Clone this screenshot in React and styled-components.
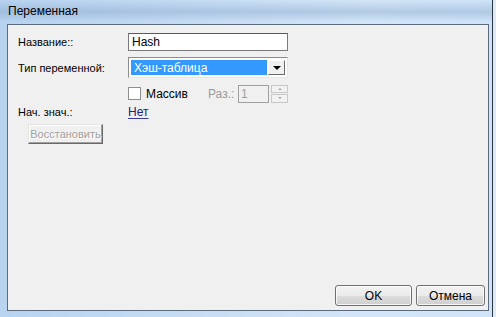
import React from 'react';
import styled, { createGlobalStyle } from 'styled-components';

const GlobalStyle = createGlobalStyle`
	html, body {
		margin: 0;
		padding: 0;
		background: #dfeaf6;
	}
	body {
		font-family: 'Liberation Sans', Arial, sans-serif;
		font-size: 11px;
		color: #000;
	}
`;

//Window frame
const Window = styled.div`
	width: 493px;
	height: 317px;
	box-sizing: border-box;
	display: flex;
	flex-direction: column;
	padding: 0 3px 6px 7px;
	border-right: 1px solid #2b3540;
	background:
		linear-gradient(180deg, rgba(120, 150, 190, 0) 0px, rgba(120, 150, 190, 0.35) 12px, rgba(120, 150, 190, 0) 22px),
		linear-gradient(90deg, #b7d3f0 0%, #c6ddf4 40%, #d3e6f8 75%, #cfe4f8 100%);
`;

const TitleBar = styled.div`
	height: 24px;
	display: flex;
	align-items: center;
	padding: 0 1px 2px;
	box-sizing: border-box;
	font-size: 12px;
	color: #000;
`;

const Client = styled.div`
	flex: 1;
	display: flex;
	flex-direction: column;
	justify-content: space-between;
	background: #f0f0f0;
	border: 1px solid #5c6b7b;
	padding: 8px 0 4px 10px;
`;

const Form = styled.div`
	display: grid;
	grid-template-columns: 110px 160px;
	row-gap: 6px;
	align-items: center;
`;

const Label = styled.span`
	line-height: 14px;
`;

const TextBox = styled.div`
	height: 18px;
	box-sizing: border-box;
	border: 1px solid #7a7a7a;
	border-top-color: #5a5a5a;
	background: #fff;
	display: flex;
	align-items: center;
	padding-left: 3px;
	font-size: 12px;
`;

const Select = styled.div`
	height: 21px;
	box-sizing: border-box;
	border: 1px solid;
	border-color: #8c8c8c #e6e6e6 #e6e6e6 #8c8c8c;
	background: #fff;
	display: flex;
	padding: 2px;
	gap: 1px;
`;

const SelectValue = styled.div`
	flex: 1;
	background: #3399ff;
	color: #fff;
	display: flex;
	align-items: center;
	padding-left: 3px;
	font-size: 12px;
`;

const DropButton = styled.div`
	width: 17px;
	background: #f0f0f0;
	border: 1px solid;
	border-color: #ffffff #696969 #696969 #ffffff;
	display: flex;
	align-items: center;
	justify-content: center;
	box-sizing: border-box;
`;

const Arrow = styled.span`
	width: 0;
	height: 0;
	border-left: 4px solid transparent;
	border-right: 4px solid transparent;
	border-top: 4px solid #000;
`;

const ArrayRow = styled.div`
	grid-column: 2;
	display: flex;
	align-items: center;
	height: 19px;
`;

const CheckBox = styled.span`
	width: 13px;
	height: 13px;
	box-sizing: border-box;
	border: 1px solid #8e8f8f;
	background: #fff;
	margin-right: 5px;
`;

const ArrayLabel = styled.span`
	width: 62px;
	margin-top: 1px;
	font-size: 12px;
`;

const SizeLabel = styled.span`
	width: 30px;
	color: #9a9a9a;
	font-size: 12px;
`;

const SizeBox = styled.div`
	width: 31px;
	height: 18px;
	box-sizing: border-box;
	border: 1px solid #a0a0a0;
	color: #a0a0a0;
	background: #f0f0f0;
	display: flex;
	align-items: center;
	padding-left: 2px;
	font-size: 12px;
`;

const Spinner = styled.div`
	margin-left: 2px;
	width: 17px;
	height: 18px;
	display: flex;
	flex-direction: column;
	gap: 1px;
`;

const SpinHalf = styled.div`
	flex: 1;
	box-sizing: border-box;
	border: 1px solid #c8c8c8;
	background: #f2f2f2;
	display: flex;
	align-items: center;
	justify-content: center;
	&::after {
		content: '';
		border-left: 2px solid transparent;
		border-right: 2px solid transparent;
		${(p) => (p.up ? 'border-bottom: 2px solid #a8a8a8;' : 'border-top: 2px solid #a8a8a8;')}
	}
`;

const LinkText = styled.span`
	color: #22227a;
	font-size: 12px;
	text-decoration: underline;
	text-decoration-color: #3a3aa0;
	text-underline-offset: 2px;
`;

const ValueRow = styled.div`
	grid-column: 1 / span 2;
	display: grid;
	grid-template-columns: 110px 1fr;
	height: 14px;
	margin-top: -4px;
`;

const RestoreButton = styled.div`
	margin: 5px 0 0 10px;
	width: 75px;
	height: 20px;
	box-sizing: border-box;
	border: 1px solid;
	border-color: #e3e3e3 #696969 #696969 #e3e3e3;
	box-shadow: inset -1px -1px 0 #a0a0a0, inset 1px 1px 0 #ffffff;
	background: #f0f0f0;
	color: #a0a0a0;
	text-shadow: 1px 1px 0 #ffffff;
	display: flex;
	align-items: center;
	justify-content: center;
	font-size: 11px;
	white-space: nowrap;
`;

const Footer = styled.div`
	display: flex;
	justify-content: flex-end;
	gap: 4px;
	padding-right: 3px;
`;

const Button = styled.div`
	width: ${(p) => p.w}px;
	height: 21px;
	box-sizing: border-box;
	border: 1px solid #707070;
	border-radius: 3px;
	background: linear-gradient(180deg, #f2f2f2 0%, #ebebeb 50%, #dddddd 51%, #cfcfcf 100%);
	box-shadow: inset 0 0 0 1px rgba(255, 255, 255, 0.8);
	display: flex;
	align-items: center;
	justify-content: center;
	color: #000;
	font-size: 12px;
`;

const App = () => {
	return (
		<>
			<GlobalStyle />
			<Window>
				<TitleBar>Переменная</TitleBar>
				<Client>
					<div>
						<Form>
							<Label>Название::</Label>
							<TextBox>Hash</TextBox>
							<Label>Тип переменной:</Label>
							<Select>
								<SelectValue>Хэш-таблица</SelectValue>
								<DropButton>
									<Arrow />
								</DropButton>
							</Select>
							<ArrayRow>
								<CheckBox />
								<ArrayLabel>Массив</ArrayLabel>
								<SizeLabel>Раз.:</SizeLabel>
								<SizeBox>1</SizeBox>
								<Spinner>
									<SpinHalf up />
									<SpinHalf />
								</Spinner>
							</ArrayRow>
							<ValueRow>
								<Label>Нач. знач.:</Label>
								<div>
									<LinkText>Нет</LinkText>
								</div>
							</ValueRow>
						</Form>
						<RestoreButton>Восстановить</RestoreButton>
					</div>
					<Footer>
						<Button w={77}>OK</Button>
						<Button w={69}>Отмена</Button>
					</Footer>
				</Client>
			</Window>
		</>
	);
};

export default App;
